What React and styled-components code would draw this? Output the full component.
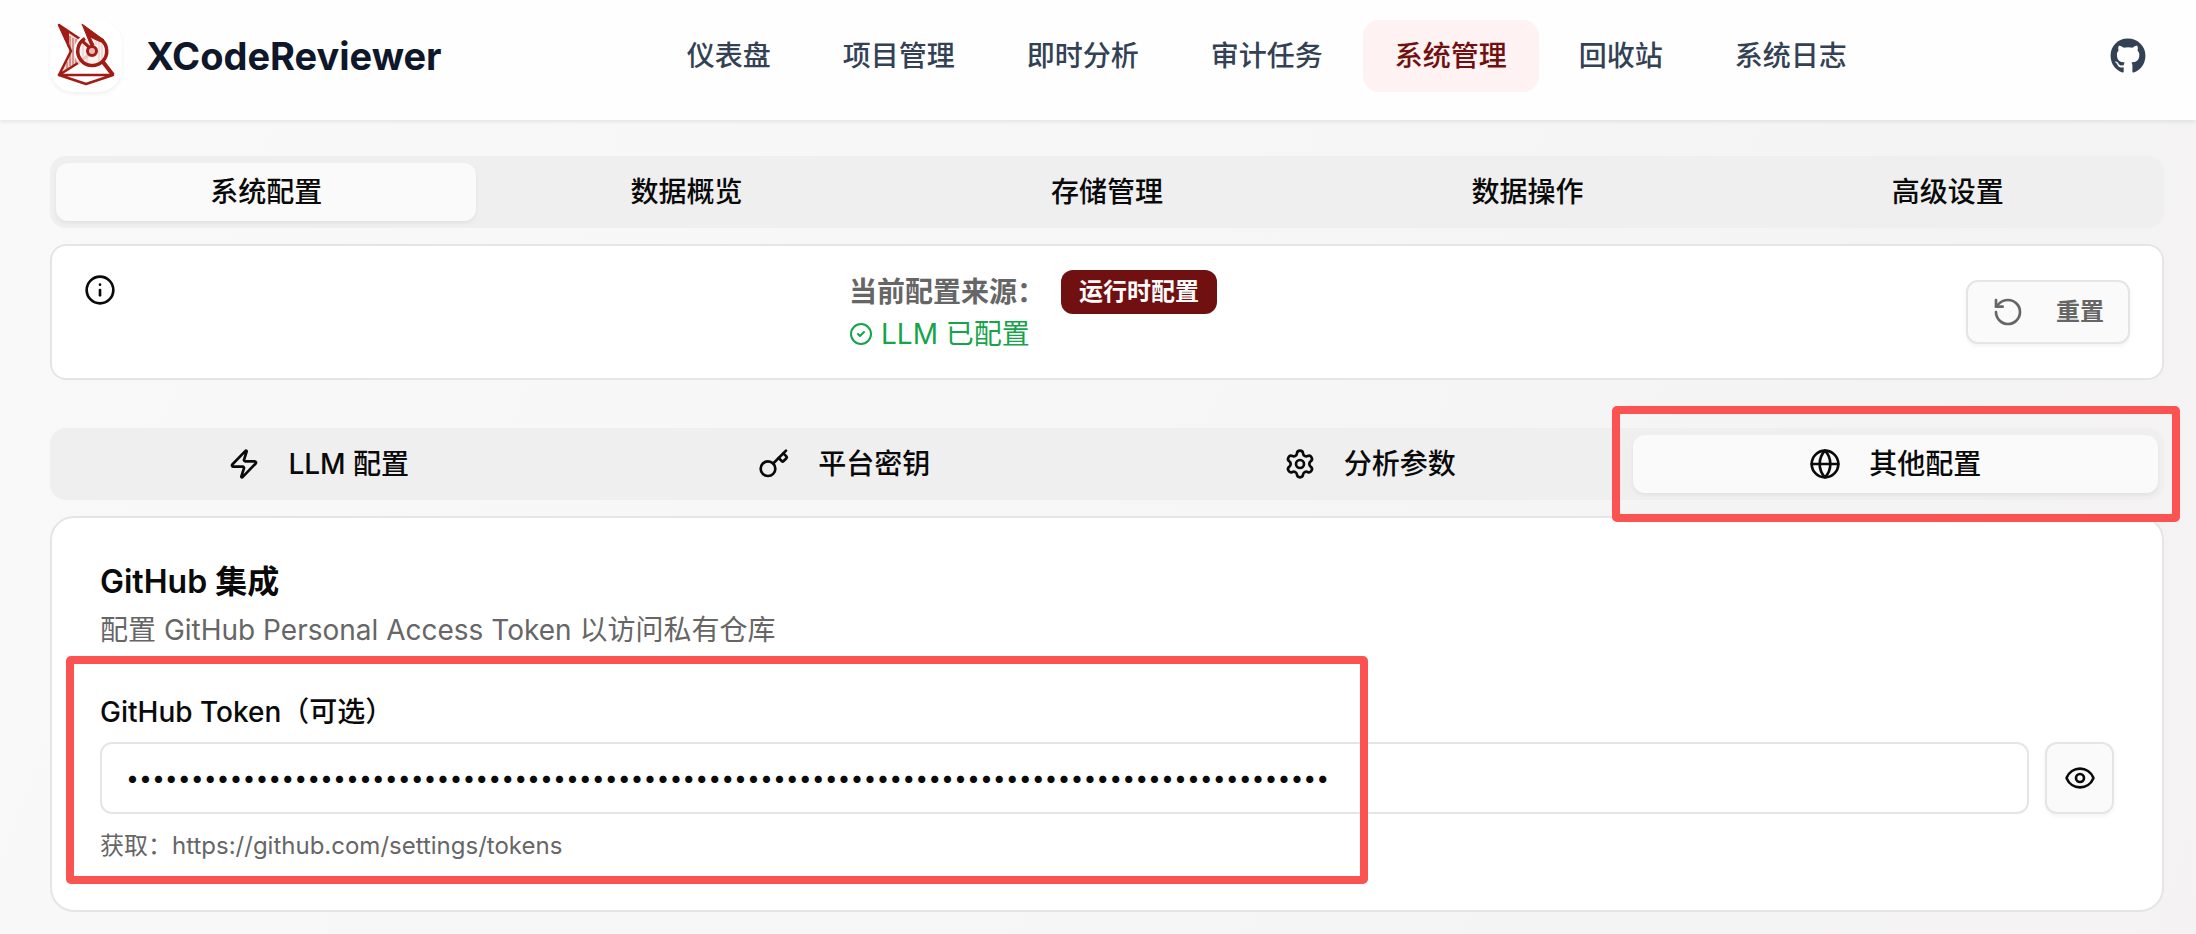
import { useState } from "react";
import styled, { createGlobalStyle, css } from "styled-components";
import {
  CircleCheck,
  Eye,
  Globe,
  Info,
  Key,
  RotateCcw,
  Settings,
  Zap,
} from "lucide-react";
import { FaGithub } from "react-icons/fa";

const navItems = [
  "仪表盘",
  "项目管理",
  "即时分析",
  "审计任务",
  "系统管理",
  "回收站",
  "系统日志",
];

const mainTabs = ["系统配置", "数据概览", "存储管理", "数据操作", "高级设置"];

const configTabs = [
  { label: "LLM 配置", Icon: Zap },
  { label: "平台密钥", Icon: Key },
  { label: "分析参数", Icon: Settings },
  { label: "其他配置", Icon: Globe },
];

const GlobalStyle = createGlobalStyle`
  *, *::before, *::after {
    box-sizing: border-box;
  }
  body {
    margin: 0;
    min-height: 100vh;
    background: linear-gradient(110deg, #f9f9f9 0%, #f6f6f6 55%, #f4f2f3 100%);
    color: #0a0a0a;
    font-family: Inter, "Noto Sans CJK SC", sans-serif;
    font-size: 28px;
    line-height: 40px;
  }
  button, input {
    font: inherit;
    color: inherit;
  }
  svg {
    flex-shrink: 0;
  }
`;

const flexCenter = css`
  display: flex;
  align-items: center;
  justify-content: center;
`;

const annotation = css`
  position: absolute;
  border: 8px solid #fb5252;
  border-radius: 5px;
  pointer-events: none;
`;

const Header = styled.header`
  display: flex;
  align-items: center;
  justify-content: space-between;
  padding: 20px 32px 28px 50px;
  background-color: #fefefe;
  box-shadow: 0 2px 4px rgba(0, 0, 0, 0.08);
`;

const Brand = styled.a`
  display: flex;
  align-items: center;
  gap: 24px;
  color: #0f172a;
  font-size: 38px;
  font-weight: 700;
  text-decoration: none;
`;

const LogoBox = styled.span`
  ${flexCenter};
  width: 72px;
  height: 72px;
  border-radius: 24px;
  background-color: #ffffff;
  box-shadow: 0 2px 4px rgba(0, 0, 0, 0.06);
`;

const Nav = styled.nav`
  display: flex;
  gap: 8px;
`;

const NavLink = styled.a`
  padding: 16px 32px;
  border-radius: 16px;
  background-color: ${({ $active }) => ($active ? "#fef2f2" : "transparent")};
  color: ${({ $active }) => ($active ? "#701010" : "#334155")};
  font-weight: 500;
  text-decoration: none;
`;

const GithubLink = styled.a`
  ${flexCenter};
  width: 72px;
  height: 72px;
  color: #334155;
`;

const Main = styled.main`
  display: flex;
  flex-direction: column;
  gap: 16px;
  padding: 36px 32px 22px 50px;
`;

const TabList = styled.div`
  display: flex;
  padding: 7px 6px;
  border-radius: 16px;
  background-color: #efefef;
`;

const Tab = styled.button`
  ${flexCenter};
  flex: 1;
  gap: 28px;
  position: relative;
  height: 58px;
  padding: 0;
  border: none;
  border-radius: 12px;
  background-color: ${({ $active }) => ($active ? "#fafafa" : "transparent")};
  box-shadow: ${({ $active }) => ($active ? "0 2px 4px rgba(0, 0, 0, 0.06)" : "none")};
  font-weight: 500;
`;

const TabMark = styled.span`
  ${annotation};
  inset: -29px -22px -29px -21px;
`;

const StatusCard = styled.section`
  display: flex;
  align-items: center;
  justify-content: space-between;
  margin-bottom: 32px;
  padding: 24px 32px;
  border: 2px solid #e5e5e5;
  border-radius: 16px;
  background-color: #ffffff;
`;

const StatusIcon = styled.span`
  display: flex;
  align-self: flex-start;
  padding-top: 4px;
`;

const StatusText = styled.div`
  padding-right: 16px;
`;

const SourceRow = styled.div`
  display: flex;
  align-items: center;
  gap: 16px;
  color: #666666;
  font-weight: 600;
`;

const Badge = styled.span`
  padding: 6px 18px;
  border-radius: 12px;
  background-color: #701010;
  color: #fafafa;
  font-size: 24px;
  font-weight: 600;
  line-height: 32px;
`;

const ReadyRow = styled.div`
  display: flex;
  align-items: center;
  gap: 8px;
  color: #16a34a;
`;

const ResetButton = styled.button`
  display: flex;
  align-items: center;
  gap: 32px;
  height: 64px;
  padding: 0 24px;
  border: 2px solid #e5e5e5;
  border-radius: 12px;
  background-color: #fafafa;
  box-shadow: 0 2px 4px rgba(0, 0, 0, 0.05);
  color: #666666;
  font-size: 24px;
  font-weight: 600;
`;

const Card = styled.section`
  padding: 48px;
  border: 2px solid #e5e5e5;
  border-radius: 24px;
  background-color: #ffffff;
`;

const CardTitle = styled.h2`
  margin: 0;
  font-size: 32px;
  font-weight: 600;
  line-height: 32px;
`;

const CardDesc = styled.p`
  margin: 12px 0 48px;
  color: #666666;
`;

const Field = styled.div`
  display: flex;
  flex-direction: column;
  gap: 16px;
  position: relative;
`;

const Label = styled.label`
  font-weight: 500;
  line-height: 28px;
`;

const InputRow = styled.div`
  display: flex;
  gap: 16px;
`;

const Input = styled.input`
  flex: 1;
  min-width: 0;
  height: 72px;
  padding: 0 24px;
  border: 2px solid #e5e5e5;
  border-radius: 12px;
  background-color: #ffffff;
  font-size: 23px;
`;

const EyeButton = styled.button`
  ${flexCenter};
  width: 69px;
  height: 72px;
  padding: 0;
  border: 2px solid #e5e5e5;
  border-radius: 12px;
  background-color: #fafafa;
  box-shadow: 0 2px 4px rgba(0, 0, 0, 0.05);
`;

const Hint = styled.p`
  margin: 0;
  color: #666666;
  font-size: 24px;
  line-height: 32px;
`;

const FieldMark = styled.span`
  ${annotation};
  top: -42px;
  bottom: -22px;
  left: -34px;
  width: 1302px;
`;

const Logo = () => (
  <svg width="72" height="72" viewBox="0 0 72 72" fill="none" aria-hidden="true">
    <path d="M10 6 L30 19 L25 31 L29 43 L10 55 L21 31 Z" fill="#f0d5d2" />
    <path
      d="M15 14 V20 M18 14 V27 M20 16 V46 M23 18 V46 M26 19 V24 M26 38 V44 M17 42 V50"
      stroke="#b8554d"
      strokeWidth="1"
    />
    <path d="M30 19 L9 5 L21 31 L9 55 L28 43" stroke="#a01c14" strokeWidth="2.5" strokeLinejoin="round" />
    <path d="M9 5 L19 12 L19 24 Z" fill="#a01c14" />
    <circle cx="42" cy="31" r="18" fill="#ffffff" />
    <circle cx="42" cy="31" r="12" fill="#fbf3f2" />
    <path d="M49 19 V43 M52 22 V40 M46 18 V25 M37 34 V42 M33 25 V36" stroke="#e6bfbb" strokeWidth="1" />
    <path d="M28 43 L40 34" stroke="#ecc6c3" strokeWidth="3" />
    <path d="M35 18.5 A14.5 14.5 0 1 0 51 19.5" stroke="#a01c14" strokeWidth="3.5" />
    <path d="M32 4 L54 20 L51 22 L40 17 L44 25 L41 26 Z" fill="#a01c14" stroke="#a01c14" strokeLinejoin="round" />
    <path d="M31 20 L39 27" stroke="#a01c14" strokeWidth="3" />
    <circle cx="42" cy="31" r="4.5" fill="#e9bbb7" stroke="#a01c14" strokeWidth="3" />
    <path d="M53 42 L63 55" stroke="#a01c14" strokeWidth="4" />
    <path d="M9 55 H63 L36 64 Z" stroke="#a01c14" strokeWidth="2.5" strokeLinejoin="round" />
  </svg>
);

const App = () => {
  const [token, setToken] = useState("x".repeat(93));

  return (
    <>
      <GlobalStyle />
      <Header>
        <Brand href="#">
          <LogoBox>
            <Logo />
          </LogoBox>
          XCodeReviewer
        </Brand>
        <Nav>
          {navItems.map((item) => (
            <NavLink key={item} href="#" $active={item === "系统管理"}>
              {item}
            </NavLink>
          ))}
        </Nav>
        <GithubLink href="#" aria-label="GitHub">
          <FaGithub size={36} />
        </GithubLink>
      </Header>

      <Main>
        <TabList role="tablist">
          {mainTabs.map((label, i) => (
            <Tab key={label} role="tab" aria-selected={i === 0} $active={i === 0}>
              {label}
            </Tab>
          ))}
        </TabList>

        <StatusCard>
          <StatusIcon>
            <Info size={32} />
          </StatusIcon>
          <StatusText>
            <SourceRow>
              当前配置来源：
              <Badge>运行时配置</Badge>
            </SourceRow>
            <ReadyRow>
              <CircleCheck size={24} />
              LLM 已配置
            </ReadyRow>
          </StatusText>
          <ResetButton>
            <RotateCcw size={32} />
            重置
          </ResetButton>
        </StatusCard>

        <TabList role="tablist">
          {configTabs.map(({ label, Icon }) => {
            const active = label === "其他配置";
            return (
              <Tab key={label} role="tab" aria-selected={active} $active={active}>
                <Icon size={32} />
                {label}
                {active && <TabMark />}
              </Tab>
            );
          })}
        </TabList>

        <Card>
          <CardTitle>GitHub 集成</CardTitle>
          <CardDesc>配置 GitHub Personal Access Token 以访问私有仓库</CardDesc>
          <Field>
            <Label htmlFor="github-token">GitHub Token（可选）</Label>
            <InputRow>
              <Input
                id="github-token"
                type="password"
                value={token}
                onChange={(e) => setToken(e.target.value)}
              />
              <EyeButton aria-label="显示">
                <Eye size={32} />
              </EyeButton>
            </InputRow>
            <Hint>获取：https://github.com/settings/tokens</Hint>
            <FieldMark />
          </Field>
        </Card>
      </Main>
    </>
  );
};
export default App;
